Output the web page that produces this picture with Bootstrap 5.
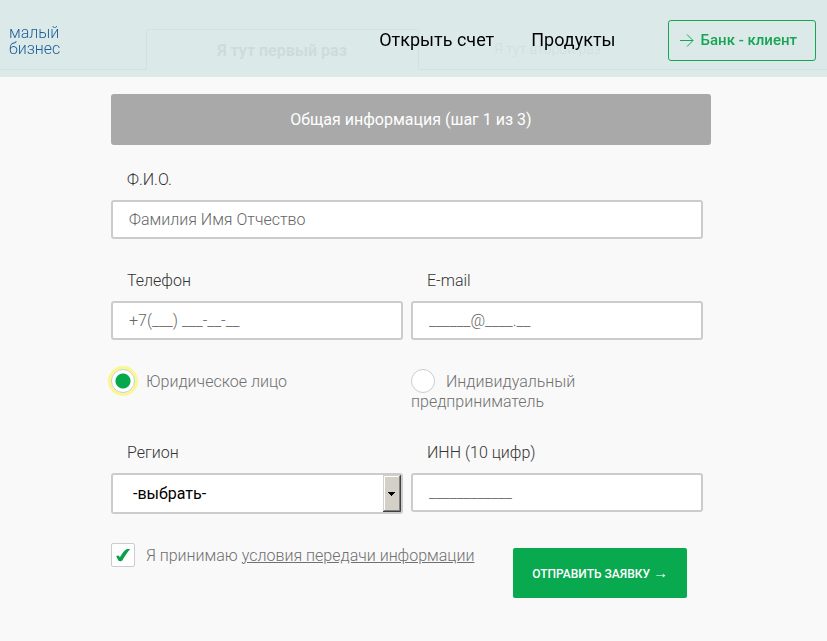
<!DOCTYPE html>
<html lang="ru">
<head>
<meta charset="utf-8">
<meta name="viewport" content="width=device-width, initial-scale=1">
<title>Малый бизнес</title>
<link href="https://cdn.jsdelivr.net/npm/bootstrap@5.3.0/dist/css/bootstrap.min.css" rel="stylesheet">
<style>
body { background: #f9f9f9; color: #333; font: 300 16px/19px Roboto, "Liberation Sans", sans-serif; }
.site-header { background: rgba(214, 231, 230, .88); min-height: 77px; padding: 20px 11px 16px 9px; }
.brand { color: #1f5f99; line-height: 16px; margin-top: 5px; }
.site-link { color: #000; font-size: 18px; font-weight: 400; line-height: 24px; margin-top: 8px; }
.site-links { gap: 37px; margin-right: 52px; }
.client-btn { border: 1px solid #17a455; border-radius: 3px; color: #17a455; font-size: 15px; font-weight: 500; height: 41px; padding: 0 18px 0 11px; gap: 7px; }
.client-btn:hover { background: #17a455; color: #fff; }
.visit-tabs { padding: 29px 5px 0 0; border-bottom: 1px solid #bbb; }
.visit-tab { border: 1px solid transparent; border-bottom: 0; background: none; color: #999; height: 40px; padding: 0; width: 258px; font-size: 14px; font-weight: 300; }
.visit-tab.active { border-color: #bbb; border-radius: 3px 3px 0 0; background: #f9f9f9; color: #888; font-size: 16px; font-weight: 700; width: 273px; margin-bottom: -1px; height: 41px; }
.page-main { padding: 24px 5px 24px 0; }
.form-wrap { max-width: 600px; }
.step-title { background: #a9a9a9; border-radius: 3px; color: #fff; font-size: 16px; font-weight: 400; line-height: 19px; padding: 16px; margin: 0; }
.fields { display: grid; grid-template-columns: 1fr 1fr; column-gap: 8px; margin-right: 8px; padding-top: 25px; }
.wide { grid-column: span 2; }
.caption { display: block; padding: 0 16px; margin-bottom: 11px; }
.field { border: 2px solid #ccc; border-radius: 3px; background-color: #fff; color: #000; font-size: 16px; font-weight: 300; line-height: 19px; padding: 8px 16px; }
.field::placeholder { color: #666; opacity: 1; }
.field-row { margin-bottom: 32px; }
.field.region { height: 41px; font-weight: 400; padding: 0 20px; appearance: none; background-repeat: no-repeat; background-position: right center; background-size: 18px 37px;
  background-image: url("data:image/svg+xml,%3Csvg xmlns='http://www.w3.org/2000/svg' viewBox='0 0 18 37'%3E%3Cpath fill='%23404040' d='M0 0h18v37H0z'/%3E%3Cpath fill='%23d4d0c8' d='M0 0h17v36H0z'/%3E%3Cpath fill='%23808080' d='M1 35h15V1h1v35H1z'/%3E%3Cpath fill='%23fff' d='M1 1h15v1H2v33H1z'/%3E%3Cpath fill='%23000' d='M5 17h7v1h-1v1h-1v1H9v1H8v-1H7v-1H6v-1H5z'/%3E%3C/svg%3E"); }
.choice { color: #707070; }
.choice input { appearance: none; width: 24px; height: 24px; border: 1px solid #c9ccd2; background: #fff; vertical-align: middle; margin: -5px 11px -1px 0; }
.choice input[type=radio] { border-radius: 50%; }
.choice input[type=radio]:checked { background: radial-gradient(circle, #05a94d 7px, #fff 8px); box-shadow: 0 0 0 3px #f9f78e; }
.choice input[type=checkbox] { border-radius: 2px; }
.choice input[type=checkbox]:checked { background: #fff url("data:image/svg+xml,%3Csvg xmlns='http://www.w3.org/2000/svg' viewBox='0 0 22 22'%3E%3Cpath fill='%230b9f4c' d='M4.3 12.2c1.2-1.2 2.500-1 3.600 1C10 9.800 12 6.500 14 5.400c1.500-.7 3-.5 4.200-.4C15.500 8 12.500 12.500 10.300 16.500c-.7 1.100-3.300 1.100-4 0z'/%3E%3C/svg%3E"); }
.choice a { color: inherit; }
.kind { margin-bottom: 32px; }
.finish { padding-right: 24px; margin-top: 32px; }
.send-btn { background: #08a94f; border-radius: 2px; color: #fff; font-size: 12px; font-weight: 500; line-height: 18px; padding: 16px 19px; border: 0; height: 50px; margin-top: 2px; }
.send-btn:hover { background: #078f43; color: #fff; }
.send-arrow { font: 15px/18px "Liberation Sans", sans-serif; }
</style>
</head>
<body>
<header class="site-header fixed-top d-flex align-items-start">
  <a class="brand text-decoration-none me-auto" href="#">малый<br>бизнес</a>
  <nav class="site-links d-flex">
    <a class="site-link text-decoration-none" href="#">Открыть счет</a>
    <a class="site-link text-decoration-none" href="#">Продукты</a>
  </nav>
  <a class="client-btn btn d-flex align-items-center" href="#">
    <svg width="14" height="14" viewBox="0 0 14 14" fill="none" stroke="currentColor" aria-hidden="true"><path d="M0 6.500h13M7 .5 13 6.500 7 12.500"/></svg>
    Банк - клиент
  </a>
</header>

<div class="visit-tabs d-flex justify-content-center">
  <button class="visit-tab active" type="button">Я тут первый раз</button>
  <button class="visit-tab" type="button">Я тут второй раз</button>
</div>

<main class="page-main">
  <form class="form-wrap mx-auto">
    <h1 class="step-title text-center">Общая информация (шаг 1 из 3)</h1>
    <div class="fields">
      <div class="field-row wide">
        <label class="caption" for="fio">Ф.И.О.</label>
        <input class="field w-100" id="fio" type="text" placeholder="Фамилия Имя Отчество">
      </div>
      <div class="field-row">
        <label class="caption" for="phone">Телефон</label>
        <input class="field w-100" id="phone" type="tel" placeholder="+7(___) ___-__-__">
      </div>
      <div class="field-row">
        <label class="caption" for="email">E-mail</label>
        <input class="field w-100" id="email" type="text" placeholder="______@____.__">
      </div>
      <div class="kind">
        <label class="choice"><input type="radio" name="kind" checked>Юридическое лицо</label>
      </div>
      <div class="kind">
        <label class="choice"><input type="radio" name="kind">Индивидуальный предприниматель</label>
      </div>
      <div>
        <label class="caption" for="region">Регион</label>
        <select class="field region w-100" id="region"><option>-выбрать-</option></select>
      </div>
      <div>
        <label class="caption" for="inn">ИНН (10 цифр)</label>
        <input class="field w-100" id="inn" type="text" placeholder="____________">
      </div>
    </div>
    <div class="finish d-flex justify-content-between align-items-start">
      <label class="choice"><input type="checkbox" checked>Я принимаю <a href="#">условия передачи информации</a></label>
      <button class="send-btn" type="submit">ОТПРАВИТЬ ЗАЯВКУ <span class="send-arrow">→</span></button>
    </div>
  </form>
</main>
<script src="https://cdn.jsdelivr.net/npm/bootstrap@5.3.0/dist/js/bootstrap.bundle.min.js"></script>
</body>
</html>
